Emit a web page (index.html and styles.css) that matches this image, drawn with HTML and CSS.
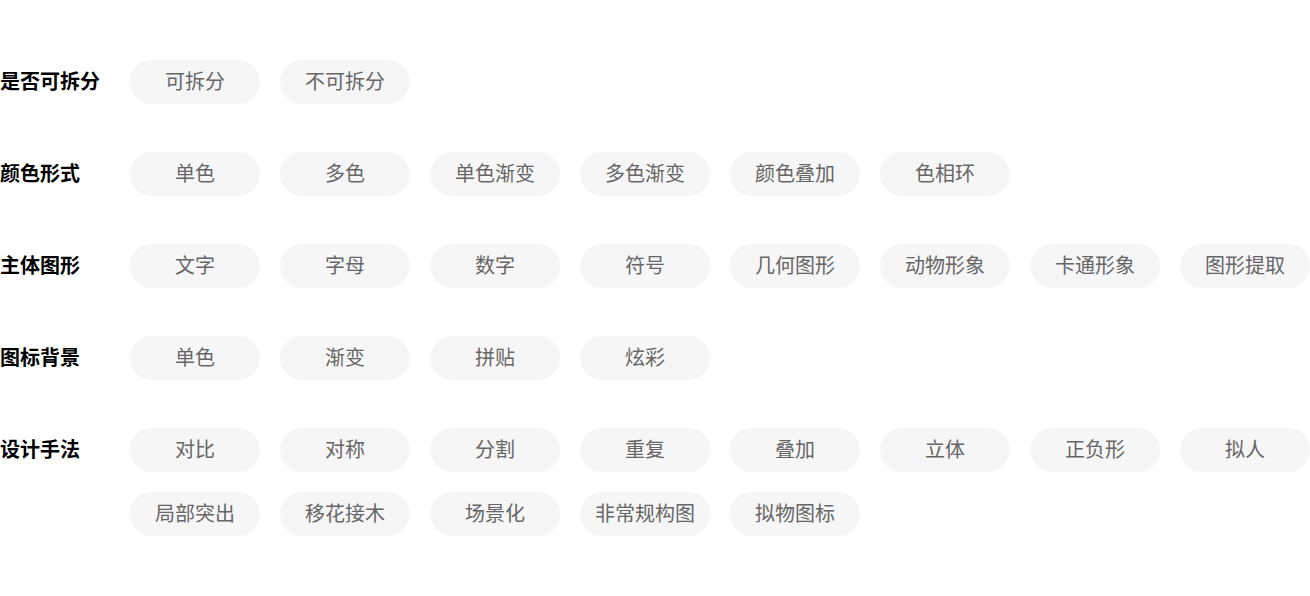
FILE: index.html
```html
<!DOCTYPE html>
<html lang="zh-CN">
<head>
    <meta charset="UTF-8">
    <meta name="viewport" content="width=device-width, initial-scale=1.0">
    <title>图标筛选</title>
    <link rel="stylesheet" href="styles.css">
</head>
<body>
    <div class="filters">
        <div class="filter-group">
            <div class="filter-label">是否可拆分</div>
            <div class="tags">
                <span class="tag">可拆分</span>
                <span class="tag">不可拆分</span>
            </div>
        </div>

        <div class="filter-group">
            <div class="filter-label">颜色形式</div>
            <div class="tags">
                <span class="tag">单色</span>
                <span class="tag">多色</span>
                <span class="tag">单色渐变</span>
                <span class="tag">多色渐变</span>
                <span class="tag">颜色叠加</span>
                <span class="tag">色相环</span>
            </div>
        </div>

        <div class="filter-group">
            <div class="filter-label">主体图形</div>
            <div class="tags">
                <span class="tag">文字</span>
                <span class="tag">字母</span>
                <span class="tag">数字</span>
                <span class="tag">符号</span>
                <span class="tag">几何图形</span>
                <span class="tag">动物形象</span>
                <span class="tag">卡通形象</span>
                <span class="tag">图形提取</span>
            </div>
        </div>

        <div class="filter-group">
            <div class="filter-label">图标背景</div>
            <div class="tags">
                <span class="tag">单色</span>
                <span class="tag">渐变</span>
                <span class="tag">拼贴</span>
                <span class="tag">炫彩</span>
            </div>
        </div>

        <div class="filter-group">
            <div class="filter-label">设计手法</div>
            <div class="tags">
                <span class="tag">对比</span>
                <span class="tag">对称</span>
                <span class="tag">分割</span>
                <span class="tag">重复</span>
                <span class="tag">叠加</span>
                <span class="tag">立体</span>
                <span class="tag">正负形</span>
                <span class="tag">拟人</span>
                <span class="tag">局部突出</span>
                <span class="tag">移花接木</span>
                <span class="tag">场景化</span>
                <span class="tag">非常规构图</span>
                <span class="tag">拟物图标</span>
            </div>
        </div>
    </div>
</body>
</html>
```

FILE: styles.css
```css
body {
    margin: 0;
    padding: 0;
    background: #fff;
    font-family: "Noto Sans CJK SC", "Noto Sans", sans-serif;
}
.filters {
    padding-top: 60px;
}
.filter-group {
    display: flex;
    margin-bottom: 48px;
}
.filter-label {
    width: 130px;
    flex-shrink: 0;
    height: 44px;
    line-height: 42px;
    font-size: 20px;
    font-weight: bold;
    color: #000;
}
.tags {
    display: flex;
    flex-wrap: wrap;
    gap: 20px;
    width: 1180px;
}
.tag {
    width: 130px;
    height: 44px;
    line-height: 42px;
    border-radius: 22px;
    background: #f6f6f6;
    color: #666;
    font-size: 20px;
    text-align: center;
}
```
